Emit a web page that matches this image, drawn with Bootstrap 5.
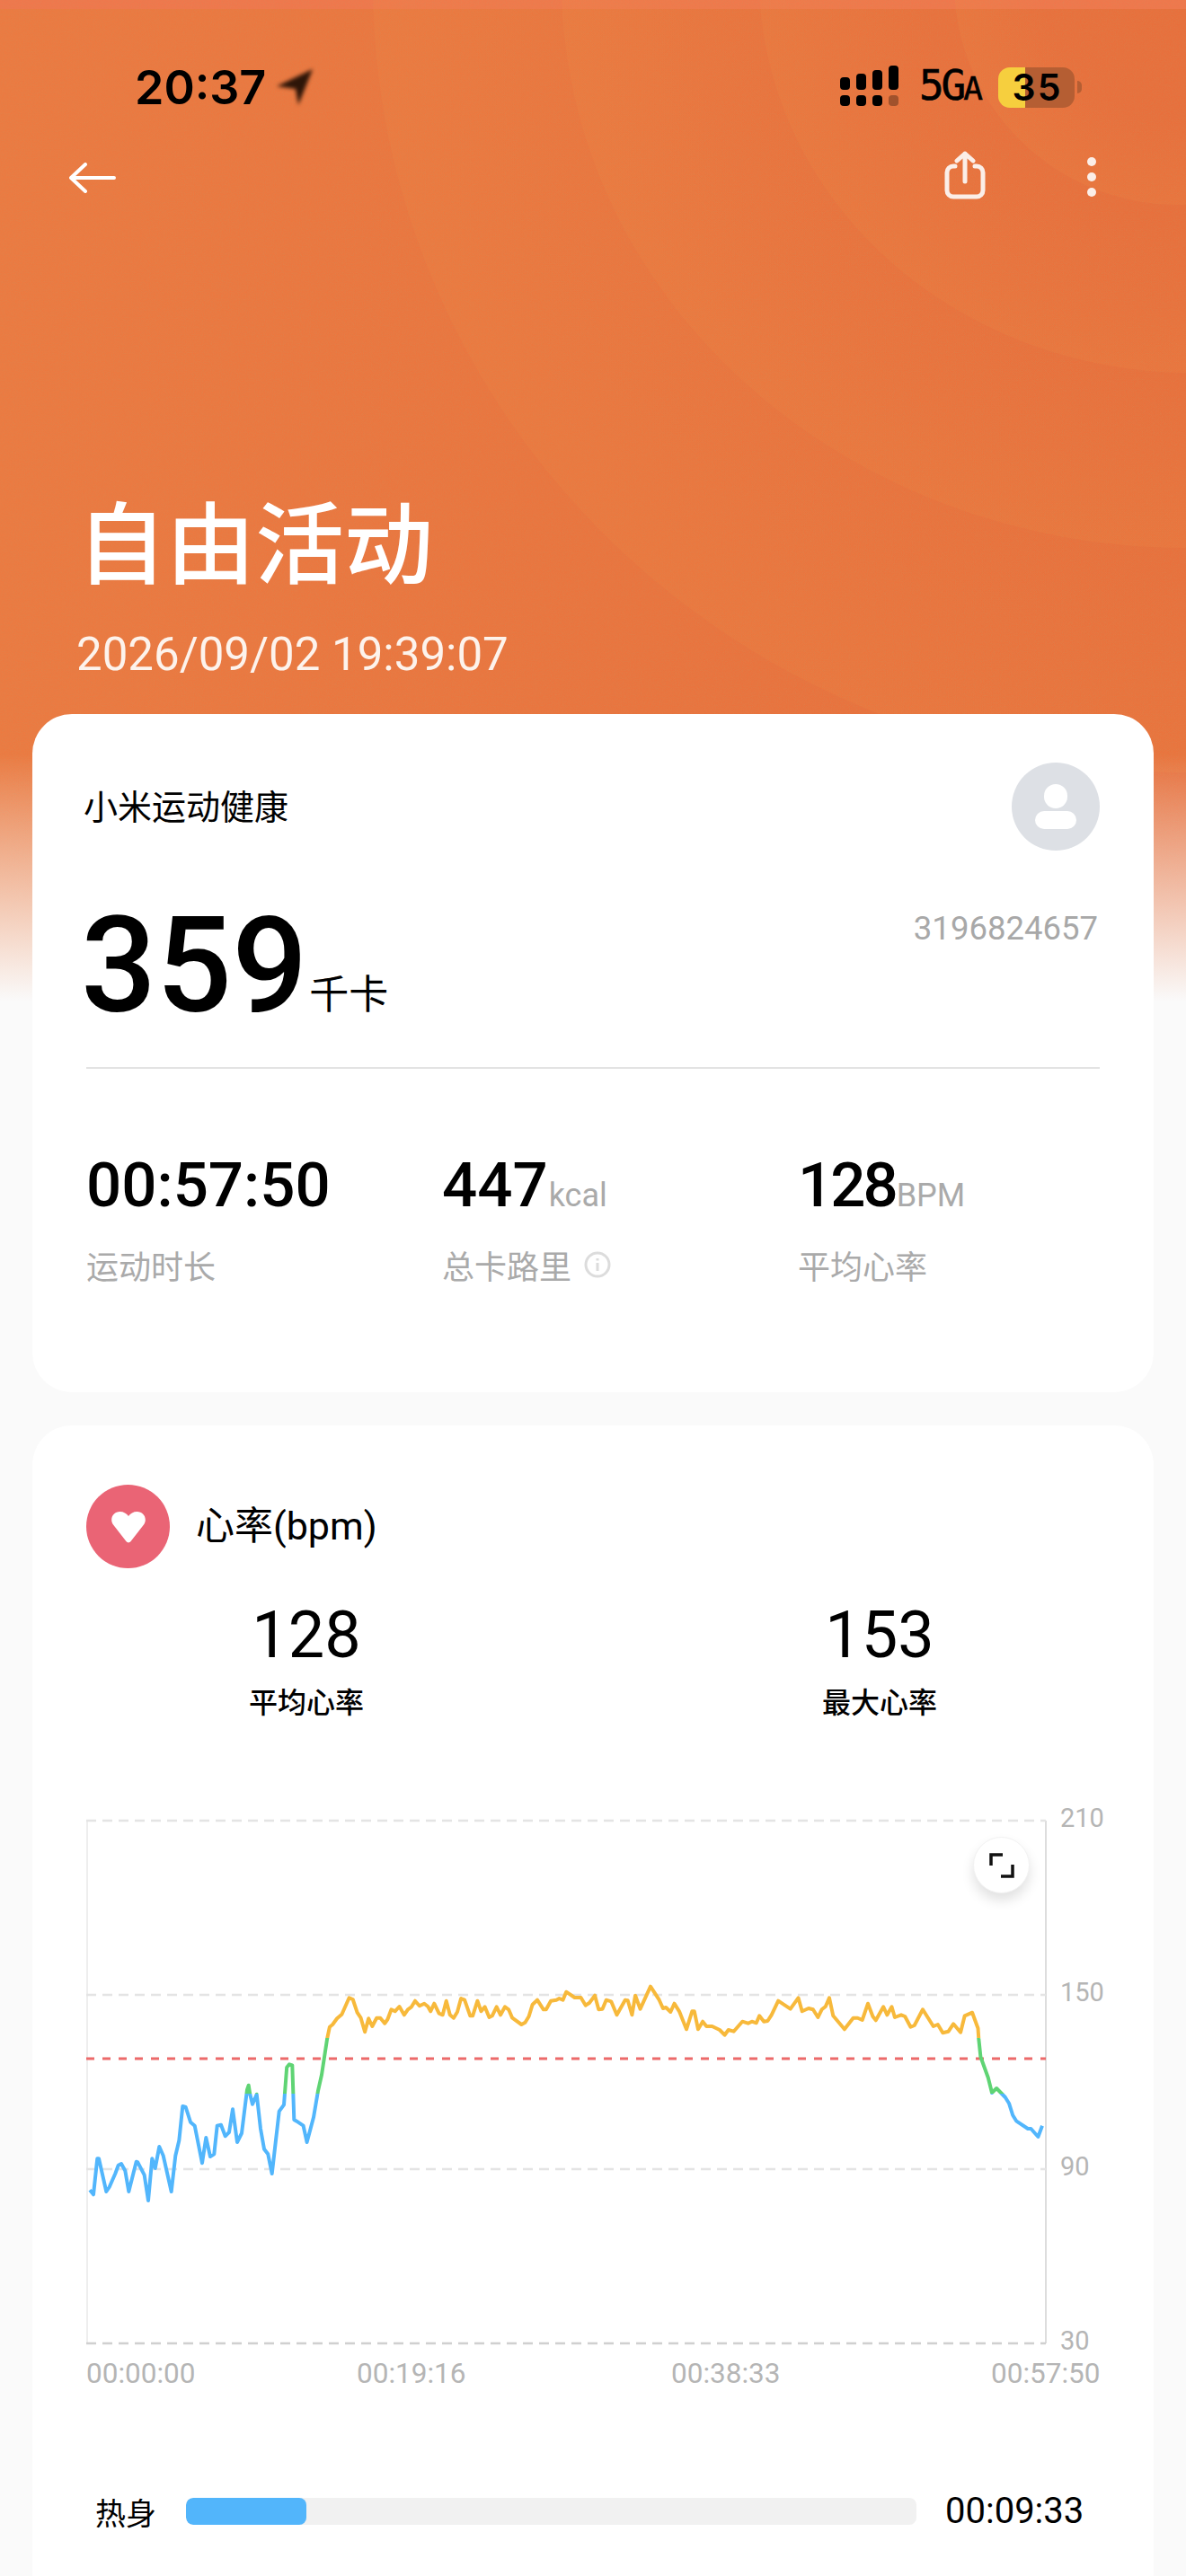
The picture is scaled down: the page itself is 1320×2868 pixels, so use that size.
<!DOCTYPE html>
<html lang="en">
<head>
  <meta charset="UTF-8" />
  <meta name="viewport" content="width=device-width, initial-scale=1" />
  <title>自由活动</title>
  <link href="https://cdn.jsdelivr.net/npm/bootstrap@5.3.0/dist/css/bootstrap.min.css" rel="stylesheet" />

  <style>
    html, body {
      height: 2868px;
      overflow: hidden;
      background: #fafafa;
      font-family: Roboto, "Noto Sans CJK SC", sans-serif;
      color: #000;
    }

    /* hero picture lies behind the page */
    .hero-bg { position: absolute; top: 0; left: 0; width: 1320px; height: 1115px; }
    .hero-bg svg { display: block; }
    .page-wrap { position: relative; }

    .status-row { height: 120px; padding: 74px 116px 0 150px; }
    .clock { font-family: Inter, sans-serif; font-size: 52px; font-weight: 600; line-height: 46px; margin-top: 2px; }
    .loc-arrow { filter: blur(2.2px); margin-left: 12px; }
    .net-text { font-family: "DejaVu Sans Mono", monospace; font-size: 46px; line-height: 46px; letter-spacing: -3px; margin: 0 20px 0 22px; -webkit-text-stroke: .6px #000; }
    .net-text span { font-size: 36px; }
    .battery {
      width: 85px; height: 45px; border-radius: 13px;
      background: linear-gradient(90deg, #f6cf3e 30px, #b55e33 30px);
      font-family: Inter, sans-serif; font-size: 41px; font-weight: 600; line-height: 45px; letter-spacing: 2px; padding-left: 2px;
    }
    .battery-tip { width: 5px; height: 14px; margin-left: 3px; border-radius: 0 5px 5px 0; background: #b55e33; }

    .top-nav { height: 54px; margin-top: 48px; padding: 0 100px 0 77px; }
    .back-arrow { margin-top: 6px; }
    .more-dots { gap: 7px; margin: 4px 0 0 113px; }
    .more-dots i { display: block; width: 10px; height: 10px; border-radius: 50%; background: #fbeee8; }

    .hero-title { font-family: "Noto Sans CJK SC", sans-serif; font-size: 99px; font-weight: 500; line-height: 112px; color: #fff; margin: 321px 0 0 86px; }
    .hero-date { font-family: Roboto, sans-serif; font-size: 51px; line-height: 56px; color: #fdf3ec; margin: 46px 0 38px 85px; }

    .sheet { margin: 0 36px; border: 0; border-radius: 44px; background: #fff; padding: 0 60px; }
    .sheet-sum { height: 755px; padding-top: 54px; }
    .sheet-heart { height: 1400px; margin-top: 37px; padding-top: 66px; }

    .app-name { font-family: "Noto Sans CJK SC", sans-serif; font-size: 38px; margin: 0 0 5px -3px; }
    .avatar { width: 98px; height: 98px; background: #dde0e5; }
    .big-row { height: 150px; margin-top: 54px; }
    .big-num { font-size: 148px; font-weight: 500; line-height: 150px; margin-left: -6px; }
    .big-unit { font-family: "Noto Sans CJK SC", sans-serif; font-size: 44px; margin-left: 2px; line-height: 44px; position: relative; top: -3px; }
    .rec-id { font-size: 36.5px; line-height: 40px; color: #a8a8a8; margin-top: 13px; margin-right: 2px; }
    .sum-line { height: 2px; background: #e3e3e3; margin: 37px 0 94px; }

    .stat-grid { width: 1188px; }
    .stat-num { font-size: 69px; font-weight: 500; line-height: 72px; height: 72px; }
    .stat-tight { letter-spacing: -3px; }
    .stat-unit { font-size: 36px; font-weight: 400; line-height: 40px; letter-spacing: 0; color: #aaa; margin-left: 1px; }
    .stat-label { font-family: "Noto Sans CJK SC", sans-serif; font-size: 36px; line-height: 44px; color: #aaa; margin-top: 30px; }
    .info-mark { margin-left: 14px; }

    .heart-dot { width: 93px; height: 93px; background: #ea6475; }
    .heart-title { font-size: 43px; margin-left: 29px; }
    .hr-nums { gap: 318px; margin-top: 37px; }
    .hr-col { width: 320px; }
    .hr-num { font-size: 72px; line-height: 76px; }
    .hr-label { font-family: "Noto Sans CJK SC", sans-serif; font-size: 32px; font-weight: 500; line-height: 44px; margin-top: 12px; }

    .chart-box { width: 1150px; height: 655px; margin-top: 90px; }
    .chart-box svg { display: block; }
    .axis-text { font-family: Roboto, sans-serif; font-size: 31.5px; fill: #b5b5b5; }
    .axis-val { font-family: Roboto, sans-serif; font-size: 29px; fill: #b5b5b5; }
    .expand-btn {
      position: absolute; left: 987px; top: 40px;
      width: 63px; height: 63px; padding: 0;
      background: #fff; border: 1px solid #f2f2f2;
      box-shadow: 0 8px 14px rgba(0,0,0,.12);
    }

    .zone-row { margin-top: 116px; height: 40px; }
    .zone-name { width: 111px; padding-left: 10px; font-family: "Noto Sans CJK SC", sans-serif; font-size: 34px; }
    .zone-bar { width: 813px; height: 30px; border-radius: 8px; background: #f1f1f1; }
    .zone-bar .progress-bar { background: #52b5fb; border-radius: 8px; }
    .zone-time { font-size: 40px; margin-left: 32px; }
  </style>
</head>
<body>

  <div class="hero-bg">
    <svg width="1320" height="1115" viewBox="0 0 1320 1115">
      <defs>
        <linearGradient id="baseCol" x1="0" x2="1" y1="0" y2="0">
          <stop offset="0" stop-color="#ec7a41" />
          <stop offset="1" stop-color="#e86f3c" />
        </linearGradient>
        <radialGradient id="ringCol" cx=".5" cy=".5" r=".5">
          <stop offset=".6" stop-color="#f08a44" stop-opacity="0" />
          <stop offset="1" stop-color="#f08a44" stop-opacity=".2" />
        </radialGradient>
        <linearGradient id="fadeCol" x1="0" x2="0" y1="0" y2="1">
          <stop offset=".753" stop-color="#fafafa" stop-opacity="0" />
          <stop offset=".84" stop-color="#fafafa" stop-opacity=".36" />
          <stop offset="1" stop-color="#fafafa" />
        </linearGradient>
        <filter id="grain" x="0" y="0" width="100%" height="100%">
          <feTurbulence type="fractalNoise" baseFrequency=".9" numOctaves="2" seed="4" />
          <feColorMatrix values="0 0 0 0 .55  0 0 0 0 .3  0 0 0 0 .12  .9 0 0 0 -.3" />
        </filter>
      </defs>
      <rect width="1320" height="1115" fill="url(#baseCol)" />
      <rect width="1320" height="10" fill="#f0774c" />
      <ellipse cx="1320" cy="-20" rx="905" ry="880" fill="url(#ringCol)" />
      <ellipse cx="1320" cy="-20" rx="695" ry="630" fill="url(#ringCol)" />
      <ellipse cx="1325" cy="-25" rx="480" ry="440" fill="url(#ringCol)" />
      <circle cx="1310" cy="-20" r="248" fill="url(#ringCol)" />
      <rect width="1320" height="1115" filter="url(#grain)" opacity=".45" />
      <rect width="1320" height="1115" fill="url(#fadeCol)" />
    </svg>
  </div>

  <div class="page-wrap">
    <div class="status-row d-flex align-items-center">
      <span class="clock">20:37</span>
      <svg class="loc-arrow" width="40" height="40" viewBox="0 0 40 40"><path d="M40 0 L0 19 L21 22 L24 40 Z" fill="#2d1508" /></svg>
      <div class="ms-auto d-flex align-items-center">
        <svg width="66" height="48" viewBox="0 0 66 48" fill="#000">
          <rect x="0" y="13" width="11" height="14" rx="4" />
          <rect x="18" y="9" width="11" height="18" rx="4" />
          <rect x="36" y="5" width="11" height="22" rx="4" />
          <rect x="54" y="0" width="11" height="27" rx="4" />
          <rect x="0" y="33" width="11" height="12" rx="4" />
          <rect x="18" y="33" width="11" height="12" rx="4" />
          <rect x="36" y="33" width="11" height="12" rx="4" />
          <rect x="54" y="33" width="11" height="12" rx="4" opacity=".3" />
        </svg>
        <div class="net-text">5G<span>A</span></div>
        <div class="battery text-center">35</div>
        <div class="battery-tip"></div>
      </div>
    </div>

    <div class="top-nav d-flex align-items-center">
      <svg class="back-arrow" width="52" height="34" viewBox="0 0 52 34" fill="none" stroke="#fff" stroke-width="4" stroke-linecap="round" stroke-linejoin="round"><path d="M50 17 H3 M18 2 L2 17 L18 32" /></svg>
      <svg class="ms-auto" width="46" height="54" viewBox="0 0 46 54" fill="none" stroke="#fbeee8" stroke-width="5" stroke-linecap="round" stroke-linejoin="round"><path d="M12 17 H10 a7 7 0 0 0 -7 7 V44 a7 7 0 0 0 7 7 H36 a7 7 0 0 0 7 -7 V24 a7 7 0 0 0 -7 -7 H34 M23 34 V3 M14 11 L23 3 L32 11" /></svg>
      <div class="more-dots d-flex flex-column"><i></i><i></i><i></i></div>
    </div>

    <h1 class="hero-title">自由活动</h1>
    <div class="hero-date">2026/09/02 19:39:07</div>

    <div class="card sheet sheet-sum">
      <div class="d-flex justify-content-between align-items-center">
        <div class="app-name">小米运动健康</div>
        <div class="avatar rounded-circle d-flex align-items-center justify-content-center">
          <svg width="46" height="50" viewBox="0 0 46 50" fill="#fff"><rect x="10" y="0" width="26" height="27" rx="13" /><rect x="0" y="30" width="46" height="20" rx="10" /></svg>
        </div>
      </div>
      <div class="big-row d-flex justify-content-between">
        <div class="d-flex align-items-baseline">
          <span class="big-num">359</span><span class="big-unit">千卡</span>
        </div>
        <div class="rec-id">3196824657</div>
      </div>
      <div class="sum-line"></div>
      <div class="row g-0 stat-grid">
        <div class="col-4">
          <div class="stat-num">00:57:50</div>
          <div class="stat-label">运动时长</div>
        </div>
        <div class="col-4">
          <div class="stat-num d-flex align-items-baseline">447<span class="stat-unit">kcal</span></div>
          <div class="stat-label d-flex align-items-center">总卡路里
            <svg class="info-mark" width="30" height="30" viewBox="0 0 30 30" fill="none" stroke="#dcdcdc" stroke-width="3"><circle cx="15" cy="15" r="13" /><path d="M15 13 V22 M15 8 V10.5" /></svg>
          </div>
        </div>
        <div class="col-4">
          <div class="stat-num stat-tight d-flex align-items-baseline">128<span class="stat-unit">BPM</span></div>
          <div class="stat-label">平均心率</div>
        </div>
      </div>
    </div>

    <div class="card sheet sheet-heart">
      <div class="d-flex align-items-center">
        <div class="heart-dot rounded-circle d-flex align-items-center justify-content-center">
          <svg width="40" height="36" viewBox="0 0 40 36" fill="#fff"><path d="M20 35.5 c-1 0 -2 -.6 -2.6 -1.4 L3 15.5 C-1.5 9 3 1 10.5 1 C14.5 1 18 3 20 6 C22 3 25.5 1 29.5 1 C37 1 41.5 9 37 15.5 L22.6 34.1 C22 34.9 21 35.5 20 35.5Z" /></svg>
        </div>
        <div class="heart-title">心率(bpm)</div>
      </div>

      <div class="hr-nums d-flex justify-content-center text-center">
        <div class="hr-col">
          <div class="hr-num">128</div>
          <div class="hr-label">平均心率</div>
        </div>
        <div class="hr-col">
          <div class="hr-num">153</div>
          <div class="hr-label">最大心率</div>
        </div>
      </div>

      <div class="chart-box position-relative">
        <svg width="1150" height="655" viewBox="96 2005 1150 655">
          <defs>
            <!-- line colour goes by heart rate zone -->
            <linearGradient id="zoneCol" gradientUnits="userSpaceOnUse" x1="0" x2="0" y1="2200" y2="2400">
              <stop offset=".345" stop-color="#f7b93b" />
              <stop offset=".345" stop-color="#5fd474" />
              <stop offset=".655" stop-color="#5fd474" />
              <stop offset=".655" stop-color="#52b6fc" />
            </linearGradient>
          </defs>
          <path d="M97 2027 V2609" stroke="#eee" stroke-width="2" />
          <path d="M1164 2027 V2609" stroke="#ddd" stroke-width="2" />
          <g stroke-width="2.5" stroke-dasharray="11 7" fill="none">
            <path d="M96 2027 H1164" stroke="#e4e4e4" />
            <path d="M96 2221 H1164" stroke="#e4e4e4" />
            <path d="M96 2415 H1164" stroke="#e4e4e4" />
            <path d="M96 2609 H1164" stroke="#d0d0d0" />
          </g>
          <path d="M96 2292 H1164" stroke="#ec6a6a" stroke-width="3" stroke-dasharray="9 9" fill="none" />
          <polyline id="hrLine" fill="none" stroke="url(#zoneCol)" stroke-width="4" stroke-linejoin="round" />
          <text class="axis-val" x="1180" y="2034">210</text>
          <text class="axis-val" x="1180" y="2228">150</text>
          <text class="axis-val" x="1180" y="2422">90</text>
          <text class="axis-val" x="1180" y="2616">30</text>
          <text class="axis-text" x="96" y="2653">00:00:00</text>
          <text class="axis-text" x="397" y="2653">00:19:16</text>
          <text class="axis-text" x="747" y="2653">00:38:33</text>
          <text class="axis-text" x="1103" y="2653">00:57:50</text>
        </svg>
        <button class="expand-btn btn rounded-circle d-flex align-items-center justify-content-center" type="button">
          <svg width="28" height="28" viewBox="0 0 28 28" fill="none" stroke="#111" stroke-width="3.5"><path d="M2 14 V2 H15 M26 13 V26 H13" /></svg>
        </button>
      </div>

      <div class="zone-row d-flex align-items-center">
        <div class="zone-name">热身</div>
        <div class="progress zone-bar"><div class="progress-bar" style="width: 16.5%"></div></div>
        <div class="zone-time">00:09:33</div>
      </div>
    </div>
  </div>

  <script>
    // traced from the curve, three stretches in different scales
    const partA = [30,355, 42,370, 55,250, 60,250, 85,360, 95,345, 115,300, 125,272, 135,267, 148,290, 160,360, 185,260, 190,262, 212,305, 225,390, 238,250, 248,282, 262,210, 275,240, 302,360, 316,240, 328,190, 340,75, 350,78, 366,128, 380,140, 405,265, 418,180, 432,243, 445,235, 455,140, 468,137, 482,175, 495,162, 507,85, 522,195, 537,165, 555,20, 560,5, 565,35, 573,68, 587,35, 600,150, 612,218, 625,235, 638,300, 662,92, 678,70];
    const partB = [635,905, 642,895, 650,898, 655,1080, 662,1085, 680,1100, 690,1155, 708,1072, 720,985, 730,930, 745,810, 752,770, 760,762, 772,742, 785,728, 805,673, 815,678, 827,722, 837,740, 848,787, 858,742, 868,768, 880,740, 890,740, 902,758, 910,745, 920,712, 930,718, 942,702, 955,730, 965,712, 975,703, 985,683, 997,700, 1010,692, 1020,702, 1027,718, 1037,692, 1050,725, 1060,730, 1070,683, 1080,730, 1090,740, 1100,720, 1110,675, 1120,680, 1135,733, 1142,733, 1155,683, 1165,718, 1175,703, 1187,738, 1195,733, 1207,703, 1218,730, 1230,703, 1240,712, 1250,740, 1275,762, 1285,755, 1295,735, 1305,695, 1318,680, 1335,712, 1342,712, 1355,683, 1370,680, 1378,675, 1388,680, 1397,653, 1420,672, 1437,672, 1450,698, 1460,690];
    const partC = [5,665, 15,712, 25,710, 35,680, 48,685, 63,730, 85,680, 92,682, 103,730, 112,665, 125,710, 152,635, 175,680, 185,708, 193,705, 205,720, 215,692, 228,718, 247,778, 262,718, 268,718, 278,778, 290,752, 300,768, 315,768, 335,780, 348,797, 358,780, 372,785, 395,752, 410,758, 420,752, 432,757, 440,733, 452,752, 462,750, 472,730, 490,683, 522,710, 543,673, 553,718, 570,708, 582,712, 595,738, 605,712, 615,702, 625,673, 635,733, 650,755, 665,778, 688,740, 700,740, 712,747, 727,692, 740,735, 748,748, 768,703, 778,730, 790,703, 798,738, 815,730, 825,735, 840,770, 850,765, 872,712, 900,768, 912,762, 925,790, 940,785, 953,760, 972,788, 983,733, 1003,722, 1018,775, 1020,810, 1025,870, 1045,940, 1055,990, 1067,975, 1090,1005, 1100,1025, 1110,1065, 1120,1085, 1150,1110, 1158,1110, 1177,1137, 1188,1100];

    const pts = [];
    function addPart(list, x0, y0, sx, sy) {
      for (let i = 0; i < list.length; i += 2) {
        pts.push((x0 + list[i] / sx).toFixed(1) + "," + (y0 + list[i + 1] / sy).toFixed(1));
      }
    }
    addPart(partA, 90, 2320, 3, 3);
    addPart(partB, 60, 2000, 2.45, 3);
    addPart(partC, 660, 2000, 2.376, 3);
    document.getElementById("hrLine").setAttribute("points", pts.join(" "));
  </script>

  <script src="https://cdn.jsdelivr.net/npm/bootstrap@5.3.0/dist/js/bootstrap.bundle.min.js"></script>
</body>
</html>
